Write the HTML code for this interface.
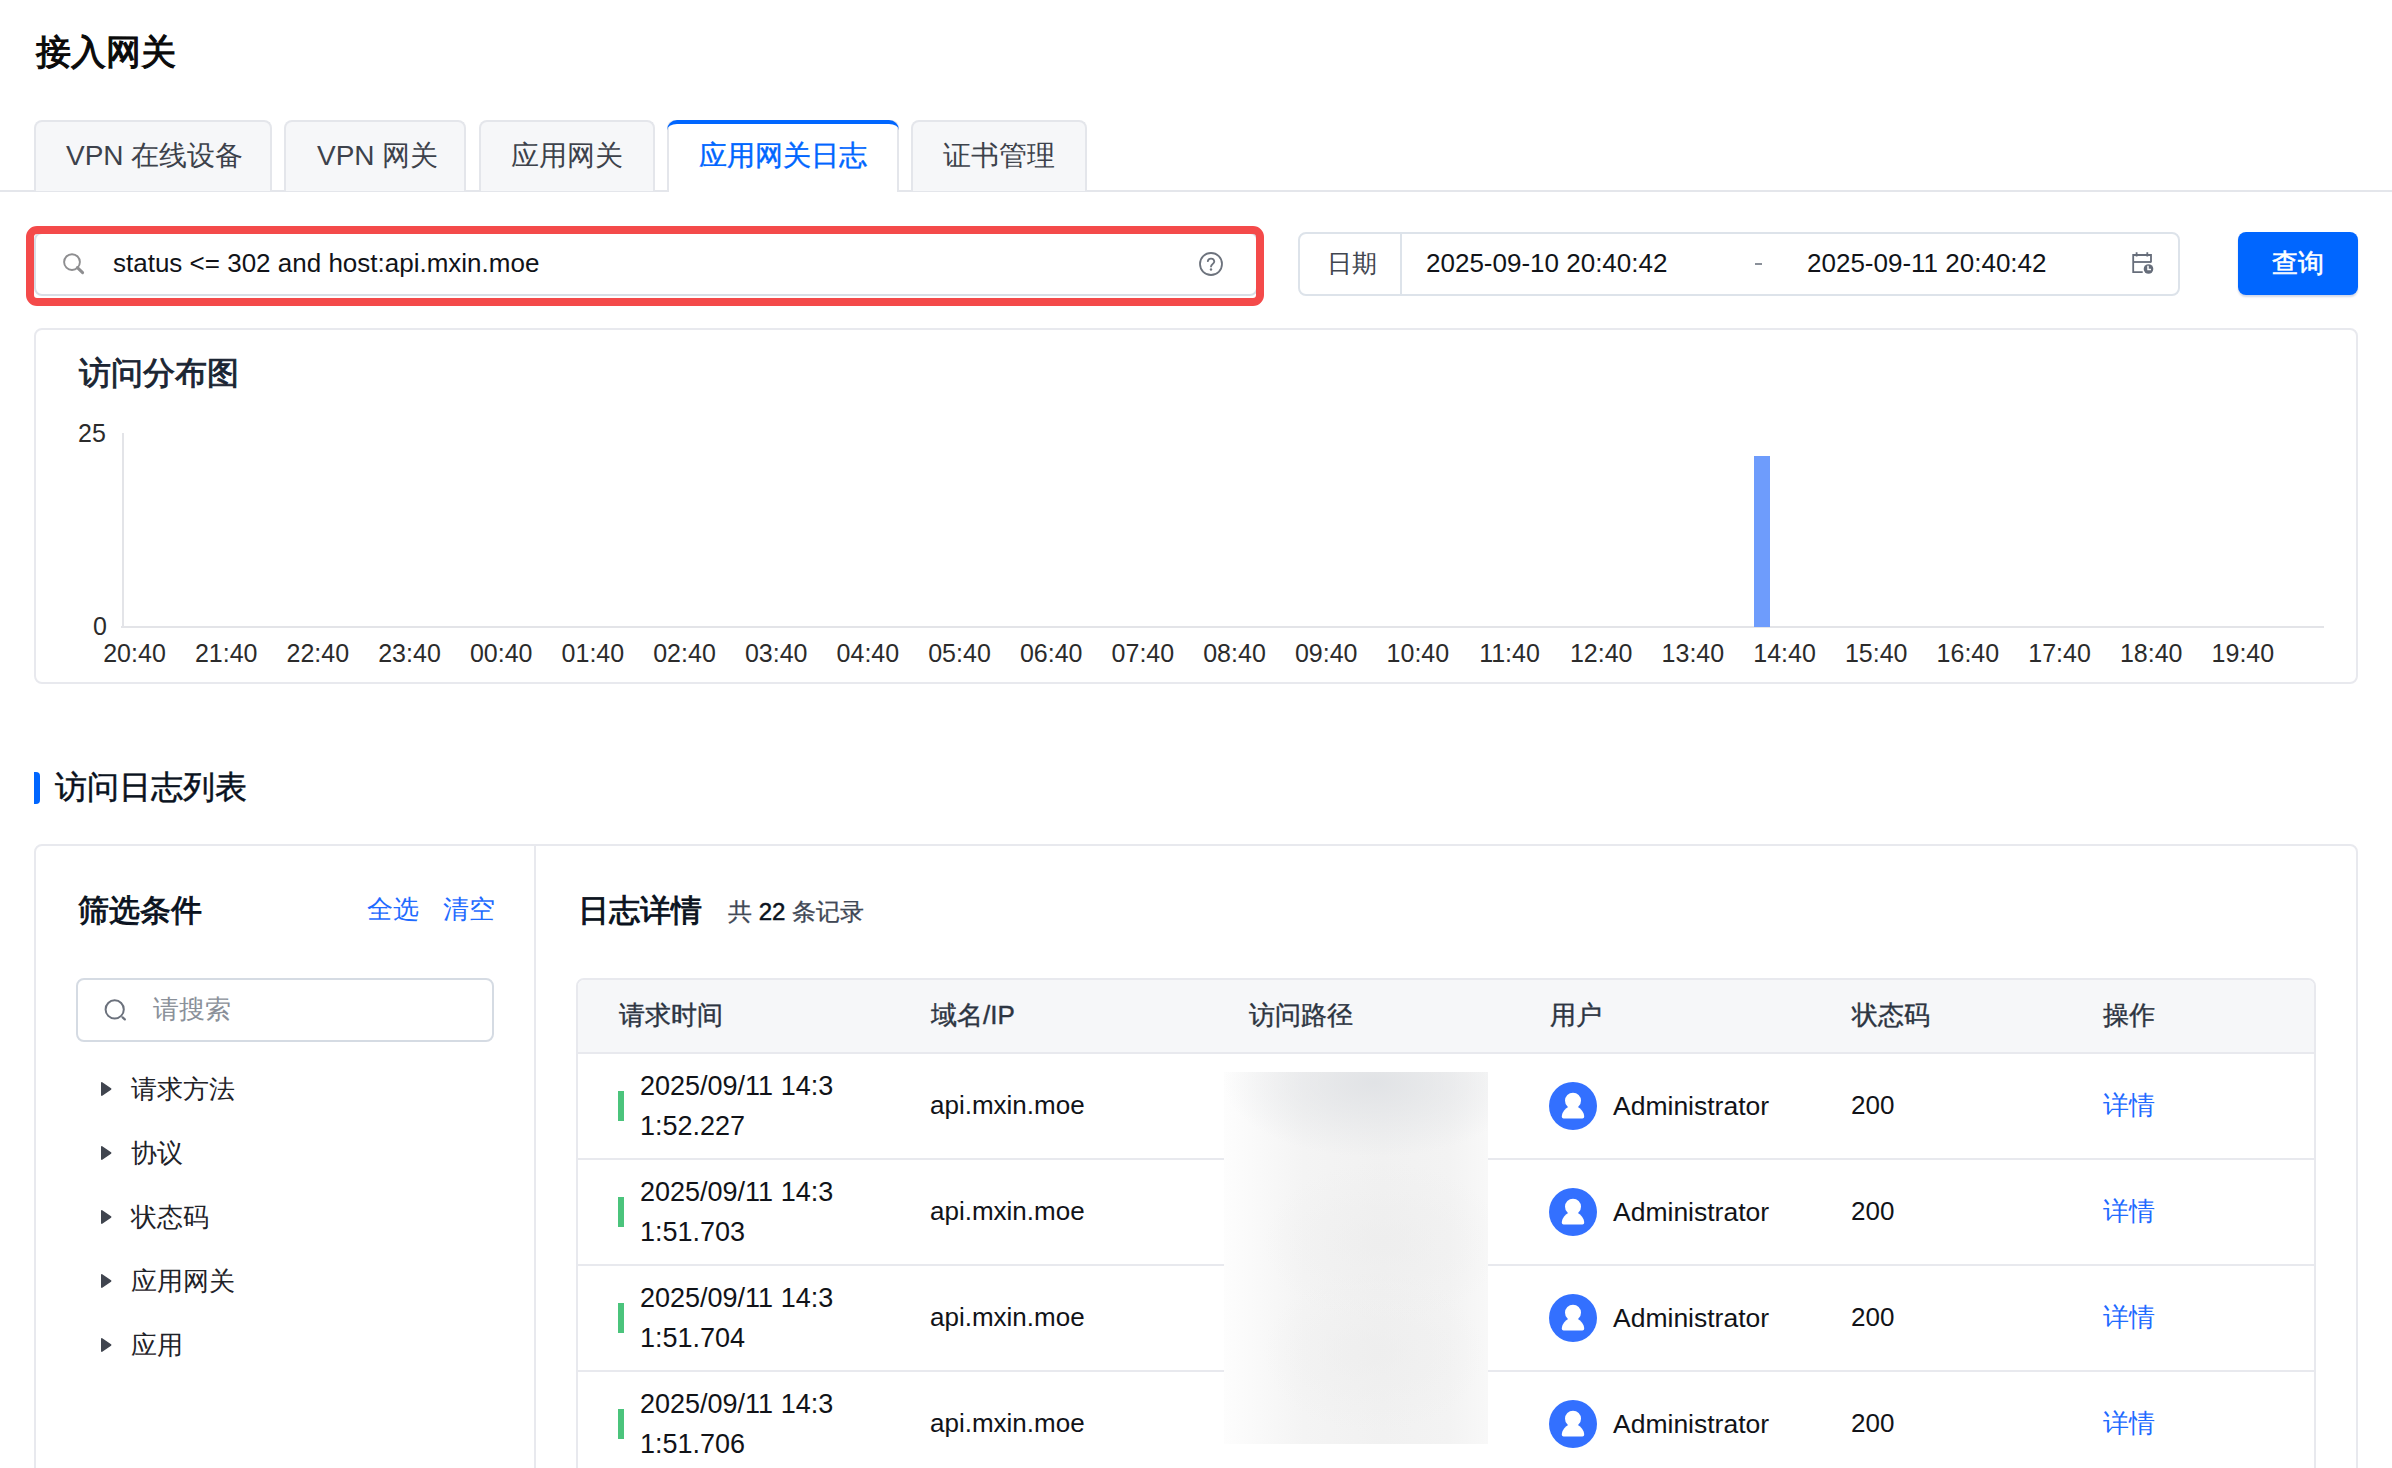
<!DOCTYPE html>
<html><head><meta charset="utf-8">
<style>
html,body{margin:0;padding:0;background:#fff;}
body{width:2392px;height:1468px;overflow:hidden;position:relative;font-family:"Liberation Sans",sans-serif;color:#1f2329;}
.a{position:absolute;white-space:nowrap;}
.t{line-height:1;}
.tab{position:absolute;top:120px;height:71px;box-sizing:border-box;border:2px solid #e4e6eb;border-bottom:none;border-radius:8px 8px 0 0;background:#f6f7f9;}
.tabtxt{position:absolute;top:140px;font-size:28px;line-height:32px;color:#3d424b;white-space:nowrap;}
.card{position:absolute;box-sizing:border-box;border:2px solid #e8e9ee;border-radius:8px;background:#fff;}
</style></head>
<body>

<div class="a t" style="left:36px;top:34px;font-size:35px;color:#0a0a0a;-webkit-text-stroke:1.1px #0a0a0a;">接入网关</div>
<div class="a" style="left:0;top:190px;width:2392px;height:2px;background:#e4e6eb;"></div>
<div class="tab" style="left:34px;width:238px;"></div>
<div class="tab" style="left:284px;width:182px;"></div>
<div class="tab" style="left:479px;width:176px;"></div>
<div class="tab" style="left:911px;width:176px;"></div>
<div class="tab" style="left:667px;width:232px;background:#fff;height:72px;"></div>
<div class="a" style="left:667px;top:120px;width:232px;height:12px;border-top:4px solid #0066ff;border-radius:10px 10px 0 0;box-sizing:border-box;"></div>
<div class="tabtxt" style="left:66px;">VPN 在线设备</div>
<div class="tabtxt" style="left:317px;">VPN 网关</div>
<div class="tabtxt" style="left:511px;">应用网关</div>
<div class="tabtxt" style="left:699px;color:#0066ff;-webkit-text-stroke:0.4px #0066ff;">应用网关日志</div>
<div class="tabtxt" style="left:943px;">证书管理</div>
<div class="a" style="left:34px;top:232px;width:1224px;height:64px;box-sizing:border-box;border:2px solid #d9dee6;border-radius:8px;background:#fff;"></div>
<div class="a" style="left:26px;top:226px;width:1238px;height:80px;box-sizing:border-box;border:8px solid #f44a4a;border-radius:11px;"></div>
<svg class="a" style="left:60px;top:250px;" width="28" height="28" viewBox="0 0 28 28"><circle cx="12" cy="12.1" r="7.9" fill="none" stroke="#8e8e90" stroke-width="1.9"/><line x1="17.4" y1="17.6" x2="22.6" y2="22.6" stroke="#8e8e90" stroke-width="3" stroke-linecap="round"/></svg>
<div class="a t" style="left:113px;top:250px;font-size:26px;color:#111318;">status &lt;= 302 and host:api.mxin.moe</div>
<svg class="a" style="left:1197px;top:250px;" width="28" height="28" viewBox="0 0 28 28"><circle cx="14" cy="14" r="11" fill="none" stroke="#6d737d" stroke-width="1.8"/><path d="M10.8 11.2a3.3 3.3 0 0 1 6.5 0.4c0 1.9-2.9 2.6-3.3 4.9" fill="none" stroke="#6d737d" stroke-width="1.8" stroke-linecap="round"/><circle cx="14" cy="19.5" r="1.2" fill="#6d737d"/></svg>
<div class="a" style="left:1298px;top:232px;width:882px;height:64px;box-sizing:border-box;border:2px solid #dde3ea;border-radius:8px;background:#fff;"></div>
<div class="a" style="left:1400px;top:234px;width:2px;height:60px;background:#dde3ea;"></div>
<div class="a t" style="left:1327px;top:251px;font-size:25px;color:#41464f;">日期</div>
<div class="a t" style="left:1426px;top:250px;font-size:26px;color:#111318;">2025-09-10 20:40:42</div>
<div class="a" style="left:1755px;top:263px;width:7px;height:2px;background:#8a9099;"></div>
<div class="a t" style="left:1807px;top:250px;font-size:26px;color:#111318;">2025-09-11 20:40:42</div>
<svg class="a" style="left:2128px;top:250px;" width="28" height="28" viewBox="0 0 28 28"><path d="M23 12.5V5H5.2V22.2H14.7" fill="none" stroke="#666d7a" stroke-width="1.8"/><path d="M5.2 12H23" stroke="#666d7a" stroke-width="1.8"/><path d="M8.6 2.3V6.6M19.3 2.3V6.6" stroke="#666d7a" stroke-width="1.8"/><circle cx="20.5" cy="19" r="4.8" fill="#666d7a"/><path d="M20 15.8V19.5H23" fill="none" stroke="#fff" stroke-width="1.5"/></svg>
<div class="a" style="left:2238px;top:232px;width:120px;height:63px;border-radius:8px;background:#0066ff;box-shadow:0 2px 2px rgba(0,40,120,0.18);"></div>
<div class="a t" style="left:2272px;top:250px;font-size:26px;color:#fff;-webkit-text-stroke:0.6px #fff;">查询</div>
<div class="card" style="left:34px;top:328px;width:2324px;height:356px;"></div>
<div class="a t" style="left:79px;top:358px;font-size:31.5px;color:#1b2533;-webkit-text-stroke:0.9px #1b2533;">访问分布图</div>
<div class="a t" style="left:78px;top:421px;font-size:25px;color:#2b2b2b;">25</div>
<div class="a t" style="left:93px;top:614px;font-size:25px;color:#2b2b2b;">0</div>
<div class="a" style="left:122px;top:433px;width:2px;height:195px;background:#e3e4e8;"></div>
<div class="a" style="left:121px;top:626px;width:2203px;height:2px;background:#e3e4e8;"></div>
<div class="a" style="left:1754px;top:456px;width:16px;height:171px;background:#6e9cfc;"></div>
<div class="a t" style="left:84.5px;top:641px;width:100px;text-align:center;font-size:25px;color:#2b2b2b;">20:40</div>
<div class="a t" style="left:176.2px;top:641px;width:100px;text-align:center;font-size:25px;color:#2b2b2b;">21:40</div>
<div class="a t" style="left:267.8px;top:641px;width:100px;text-align:center;font-size:25px;color:#2b2b2b;">22:40</div>
<div class="a t" style="left:359.5px;top:641px;width:100px;text-align:center;font-size:25px;color:#2b2b2b;">23:40</div>
<div class="a t" style="left:451.2px;top:641px;width:100px;text-align:center;font-size:25px;color:#2b2b2b;">00:40</div>
<div class="a t" style="left:542.9px;top:641px;width:100px;text-align:center;font-size:25px;color:#2b2b2b;">01:40</div>
<div class="a t" style="left:634.5px;top:641px;width:100px;text-align:center;font-size:25px;color:#2b2b2b;">02:40</div>
<div class="a t" style="left:726.2px;top:641px;width:100px;text-align:center;font-size:25px;color:#2b2b2b;">03:40</div>
<div class="a t" style="left:817.9px;top:641px;width:100px;text-align:center;font-size:25px;color:#2b2b2b;">04:40</div>
<div class="a t" style="left:909.5px;top:641px;width:100px;text-align:center;font-size:25px;color:#2b2b2b;">05:40</div>
<div class="a t" style="left:1001.2px;top:641px;width:100px;text-align:center;font-size:25px;color:#2b2b2b;">06:40</div>
<div class="a t" style="left:1092.9px;top:641px;width:100px;text-align:center;font-size:25px;color:#2b2b2b;">07:40</div>
<div class="a t" style="left:1184.5px;top:641px;width:100px;text-align:center;font-size:25px;color:#2b2b2b;">08:40</div>
<div class="a t" style="left:1276.2px;top:641px;width:100px;text-align:center;font-size:25px;color:#2b2b2b;">09:40</div>
<div class="a t" style="left:1367.9px;top:641px;width:100px;text-align:center;font-size:25px;color:#2b2b2b;">10:40</div>
<div class="a t" style="left:1459.5px;top:641px;width:100px;text-align:center;font-size:25px;color:#2b2b2b;">11:40</div>
<div class="a t" style="left:1551.2px;top:641px;width:100px;text-align:center;font-size:25px;color:#2b2b2b;">12:40</div>
<div class="a t" style="left:1642.9px;top:641px;width:100px;text-align:center;font-size:25px;color:#2b2b2b;">13:40</div>
<div class="a t" style="left:1734.6px;top:641px;width:100px;text-align:center;font-size:25px;color:#2b2b2b;">14:40</div>
<div class="a t" style="left:1826.2px;top:641px;width:100px;text-align:center;font-size:25px;color:#2b2b2b;">15:40</div>
<div class="a t" style="left:1917.9px;top:641px;width:100px;text-align:center;font-size:25px;color:#2b2b2b;">16:40</div>
<div class="a t" style="left:2009.6px;top:641px;width:100px;text-align:center;font-size:25px;color:#2b2b2b;">17:40</div>
<div class="a t" style="left:2101.2px;top:641px;width:100px;text-align:center;font-size:25px;color:#2b2b2b;">18:40</div>
<div class="a t" style="left:2192.9px;top:641px;width:100px;text-align:center;font-size:25px;color:#2b2b2b;">19:40</div>
<div class="a" style="left:34px;top:772px;width:6px;height:32px;background:#0066ff;border-radius:0 4px 4px 0;"></div>
<div class="a t" style="left:55px;top:772px;font-size:31.5px;color:#0a1220;-webkit-text-stroke:0.5px #0a1220;">访问日志列表</div>
<div class="card" style="left:34px;top:844px;width:2324px;height:700px;"></div>
<div class="a" style="left:534px;top:846px;width:2px;height:630px;background:#e8e9ee;"></div>
<div class="a t" style="left:78px;top:895px;font-size:31px;color:#0a1220;-webkit-text-stroke:0.9px #0a1220;">筛选条件</div>
<div class="a t" style="left:367px;top:896px;font-size:26px;color:#1f6bff;">全选</div>
<div class="a t" style="left:443px;top:896px;font-size:26px;color:#1f6bff;">清空</div>
<div class="a" style="left:76px;top:978px;width:418px;height:64px;box-sizing:border-box;border:2px solid #d5dbe3;border-radius:8px;"></div>
<svg class="a" style="left:100px;top:995px;" width="30" height="30" viewBox="0 0 30 30"><circle cx="14.7" cy="14.4" r="9.1" fill="none" stroke="#6b717c" stroke-width="2"/><path d="M22.6 22.4L24.8 24.4" stroke="#6b717c" stroke-width="2.2" stroke-linecap="round"/></svg>
<div class="a t" style="left:153px;top:996px;font-size:26px;color:#8a9099;">请搜索</div>
<svg class="a" style="left:100px;top:1081px;" width="12" height="16" viewBox="0 0 12 16"><path d="M1.8 1.9L10.6 8L1.8 14.1Z" fill="#40454f" stroke="#40454f" stroke-width="1.6" stroke-linejoin="round"/></svg>
<div class="a t" style="left:131px;top:1076px;font-size:26px;color:#1f2329;">请求方法</div>
<svg class="a" style="left:100px;top:1145px;" width="12" height="16" viewBox="0 0 12 16"><path d="M1.8 1.9L10.6 8L1.8 14.1Z" fill="#40454f" stroke="#40454f" stroke-width="1.6" stroke-linejoin="round"/></svg>
<div class="a t" style="left:131px;top:1140px;font-size:26px;color:#1f2329;">协议</div>
<svg class="a" style="left:100px;top:1209px;" width="12" height="16" viewBox="0 0 12 16"><path d="M1.8 1.9L10.6 8L1.8 14.1Z" fill="#40454f" stroke="#40454f" stroke-width="1.6" stroke-linejoin="round"/></svg>
<div class="a t" style="left:131px;top:1204px;font-size:26px;color:#1f2329;">状态码</div>
<svg class="a" style="left:100px;top:1273px;" width="12" height="16" viewBox="0 0 12 16"><path d="M1.8 1.9L10.6 8L1.8 14.1Z" fill="#40454f" stroke="#40454f" stroke-width="1.6" stroke-linejoin="round"/></svg>
<div class="a t" style="left:131px;top:1268px;font-size:26px;color:#1f2329;">应用网关</div>
<svg class="a" style="left:100px;top:1337px;" width="12" height="16" viewBox="0 0 12 16"><path d="M1.8 1.9L10.6 8L1.8 14.1Z" fill="#40454f" stroke="#40454f" stroke-width="1.6" stroke-linejoin="round"/></svg>
<div class="a t" style="left:131px;top:1332px;font-size:26px;color:#1f2329;">应用</div>
<div class="a t" style="left:578px;top:895px;font-size:31px;color:#0a1220;-webkit-text-stroke:0.9px #0a1220;">日志详情</div>
<div class="a t" style="left:728px;top:900px;font-size:24px;color:#414855;-webkit-text-stroke:0.3px #414855;">共 <span style="color:#0a1220;-webkit-text-stroke:0.5px #0a1220;">22</span> 条记录</div>
<div class="a" style="left:576px;top:978px;width:1740px;height:600px;box-sizing:border-box;border:2px solid #e8e9ee;border-radius:8px;"></div>
<div class="a" style="left:578px;top:980px;width:1736px;height:72px;background:#f6f7f9;border-radius:6px 6px 0 0;"></div>
<div class="a" style="left:578px;top:1052px;width:1736px;height:2px;background:#e8e9ee;"></div>
<div class="a t" style="left:619px;top:1002px;font-size:26px;color:#2d3542;-webkit-text-stroke:0.4px #2d3542;">请求时间</div>
<div class="a t" style="left:931px;top:1002px;font-size:26px;color:#2d3542;-webkit-text-stroke:0.4px #2d3542;">域名/IP</div>
<div class="a t" style="left:1249px;top:1002px;font-size:26px;color:#2d3542;-webkit-text-stroke:0.4px #2d3542;">访问路径</div>
<div class="a t" style="left:1550px;top:1002px;font-size:26px;color:#2d3542;-webkit-text-stroke:0.4px #2d3542;">用户</div>
<div class="a t" style="left:1852px;top:1002px;font-size:26px;color:#2d3542;-webkit-text-stroke:0.4px #2d3542;">状态码</div>
<div class="a t" style="left:2103px;top:1002px;font-size:26px;color:#2d3542;-webkit-text-stroke:0.4px #2d3542;">操作</div>
<div class="a" style="left:618px;top:1091px;width:6px;height:30px;background:#4bc47c;"></div>
<div class="a" style="left:640px;top:1066px;font-size:27px;line-height:40px;color:#111318;">2025/09/11 14:3<br>1:52.227</div>
<div class="a t" style="left:930px;top:1092px;font-size:26px;color:#111318;">api.mxin.moe</div>
<svg class="a" style="left:1549px;top:1082px;" width="48" height="48" viewBox="0 0 48 48"><circle cx="24" cy="24" r="24" fill="#3370ff"/><circle cx="24" cy="18.7" r="8" fill="#fff"/><path d="M20.3 24.6C16 26.6 12.8 30.6 12.8 34.8Q12.8 36.6 14.6 36.6H33.4Q35.2 36.6 35.2 34.8C35.2 30.6 32 26.6 27.7 24.6Z" fill="#fff"/></svg>
<div class="a t" style="left:1613px;top:1093px;font-size:26.5px;color:#111318;">Administrator</div>
<div class="a t" style="left:1851px;top:1092px;font-size:26px;color:#111318;">200</div>
<div class="a t" style="left:2103px;top:1092px;font-size:26px;color:#1f6bff;">详情</div>
<div class="a" style="left:578px;top:1158px;width:1736px;height:2px;background:#e8e9ee;"></div>
<div class="a" style="left:618px;top:1197px;width:6px;height:30px;background:#4bc47c;"></div>
<div class="a" style="left:640px;top:1172px;font-size:27px;line-height:40px;color:#111318;">2025/09/11 14:3<br>1:51.703</div>
<div class="a t" style="left:930px;top:1198px;font-size:26px;color:#111318;">api.mxin.moe</div>
<svg class="a" style="left:1549px;top:1188px;" width="48" height="48" viewBox="0 0 48 48"><circle cx="24" cy="24" r="24" fill="#3370ff"/><circle cx="24" cy="18.7" r="8" fill="#fff"/><path d="M20.3 24.6C16 26.6 12.8 30.6 12.8 34.8Q12.8 36.6 14.6 36.6H33.4Q35.2 36.6 35.2 34.8C35.2 30.6 32 26.6 27.7 24.6Z" fill="#fff"/></svg>
<div class="a t" style="left:1613px;top:1199px;font-size:26.5px;color:#111318;">Administrator</div>
<div class="a t" style="left:1851px;top:1198px;font-size:26px;color:#111318;">200</div>
<div class="a t" style="left:2103px;top:1198px;font-size:26px;color:#1f6bff;">详情</div>
<div class="a" style="left:578px;top:1264px;width:1736px;height:2px;background:#e8e9ee;"></div>
<div class="a" style="left:618px;top:1303px;width:6px;height:30px;background:#4bc47c;"></div>
<div class="a" style="left:640px;top:1278px;font-size:27px;line-height:40px;color:#111318;">2025/09/11 14:3<br>1:51.704</div>
<div class="a t" style="left:930px;top:1304px;font-size:26px;color:#111318;">api.mxin.moe</div>
<svg class="a" style="left:1549px;top:1294px;" width="48" height="48" viewBox="0 0 48 48"><circle cx="24" cy="24" r="24" fill="#3370ff"/><circle cx="24" cy="18.7" r="8" fill="#fff"/><path d="M20.3 24.6C16 26.6 12.8 30.6 12.8 34.8Q12.8 36.6 14.6 36.6H33.4Q35.2 36.6 35.2 34.8C35.2 30.6 32 26.6 27.7 24.6Z" fill="#fff"/></svg>
<div class="a t" style="left:1613px;top:1305px;font-size:26.5px;color:#111318;">Administrator</div>
<div class="a t" style="left:1851px;top:1304px;font-size:26px;color:#111318;">200</div>
<div class="a t" style="left:2103px;top:1304px;font-size:26px;color:#1f6bff;">详情</div>
<div class="a" style="left:578px;top:1370px;width:1736px;height:2px;background:#e8e9ee;"></div>
<div class="a" style="left:618px;top:1409px;width:6px;height:30px;background:#4bc47c;"></div>
<div class="a" style="left:640px;top:1384px;font-size:27px;line-height:40px;color:#111318;">2025/09/11 14:3<br>1:51.706</div>
<div class="a t" style="left:930px;top:1410px;font-size:26px;color:#111318;">api.mxin.moe</div>
<svg class="a" style="left:1549px;top:1400px;" width="48" height="48" viewBox="0 0 48 48"><circle cx="24" cy="24" r="24" fill="#3370ff"/><circle cx="24" cy="18.7" r="8" fill="#fff"/><path d="M20.3 24.6C16 26.6 12.8 30.6 12.8 34.8Q12.8 36.6 14.6 36.6H33.4Q35.2 36.6 35.2 34.8C35.2 30.6 32 26.6 27.7 24.6Z" fill="#fff"/></svg>
<div class="a t" style="left:1613px;top:1411px;font-size:26.5px;color:#111318;">Administrator</div>
<div class="a t" style="left:1851px;top:1410px;font-size:26px;color:#111318;">200</div>
<div class="a t" style="left:2103px;top:1410px;font-size:26px;color:#1f6bff;">详情</div>
<div class="a" style="left:1224px;top:1072px;width:264px;height:372px;background:
radial-gradient(ellipse 150px 75px at 150px 10px, rgba(224,226,229,0.95), rgba(224,226,229,0) 100%),
radial-gradient(ellipse 120px 80px at 160px 170px, rgba(236,236,236,0.6), rgba(236,236,236,0) 100%),
radial-gradient(ellipse 110px 80px at 150px 280px, rgba(236,236,236,0.6), rgba(236,236,236,0) 100%),
linear-gradient(90deg, #fdfdfd 0%, #f4f4f4 30%, #f1f1f1 60%, #f3f3f3 85%, #f8f8f8 100%);"></div>
</body></html>
